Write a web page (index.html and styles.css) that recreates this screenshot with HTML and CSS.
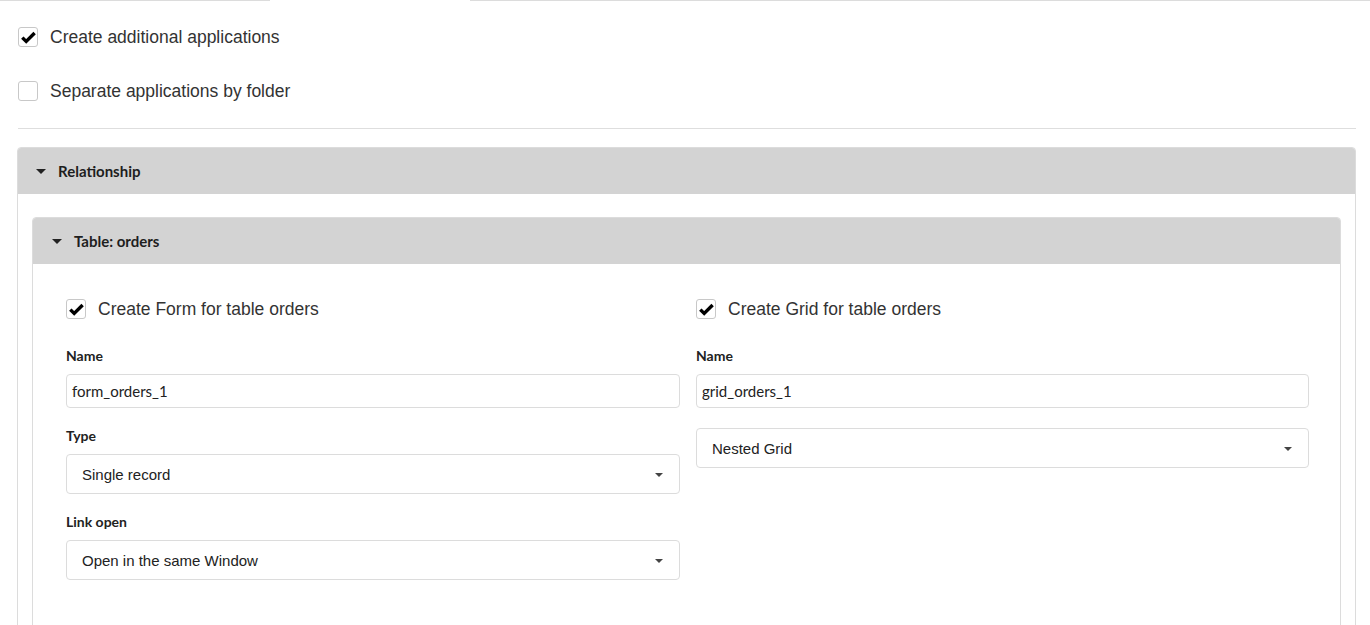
FILE: index.html
```html
<!DOCTYPE html>
<html>
<head>
	<title>Applications</title>
	<meta charset="utf-8">
	<link rel="stylesheet" href="styles.css">
</head>
<body>
  <div class="tabs">
  	<div class="tab-line first"></div>
  	<div class="tab-active"></div>
  	<div class="tab-line rest"></div>
  </div>

  <div class="page">
  	<div class="options">
  		<label class="check-row">
  			<span class="box checked">
  				<svg width="15" height="13" viewBox="0 0 15 13"><path d="M1.3 6.6 L5.2 10.4 L13.6 2" fill="none" stroke="#000" stroke-width="3.4"/></svg>
  			</span>
  			Create additional applications
  		</label>
  		<label class="check-row">
  			<span class="box"></span>
  			Separate applications by folder
  		</label>
  	</div>

  	<div class="divider"></div>

  	<div class="panel">
  		<div class="panel-head">
  			<span class="caret"></span>Relationship
  		</div>
  		<div class="panel-body outer">
  			<div class="panel">
  				<div class="panel-head inner">
  					<span class="caret"></span>Table: orders
  				</div>
  				<div class="panel-body table">
  					<div class="col">
  						<label class="check-row big">
  							<span class="box checked">
  								<svg width="15" height="13" viewBox="0 0 15 13"><path d="M1.3 6.6 L5.2 10.4 L13.6 2" fill="none" stroke="#000" stroke-width="3.4"/></svg>
  							</span>
  							Create Form for table orders
  						</label>
  						<div class="field">
  							<div class="field-label">Name</div>
  							<div class="input">form_orders_1</div>
  						</div>
  						<div class="field">
  							<div class="field-label">Type</div>
  							<div class="select">Single record<span class="arrow"></span></div>
  						</div>
  						<div class="field">
  							<div class="field-label">Link open</div>
  							<div class="select">Open in the same Window<span class="arrow"></span></div>
  						</div>
  					</div>
  					<div class="col">
  						<label class="check-row big">
  							<span class="box checked">
  								<svg width="15" height="13" viewBox="0 0 15 13"><path d="M1.3 6.6 L5.2 10.4 L13.6 2" fill="none" stroke="#000" stroke-width="3.4"/></svg>
  							</span>
  							Create Grid for table orders
  						</label>
  						<div class="field">
  							<div class="field-label">Name</div>
  							<div class="input">grid_orders_1</div>
  						</div>
  						<div class="select nolabel">Nested Grid<span class="arrow"></span></div>
  					</div>
  				</div>
  			</div>
  		</div>
  	</div>
  </div>
</body>
</html>
```

FILE: styles.css
```css
body {
	margin: 0;
	background: #fff;
	color: #333;
	font-family: "Liberation Sans", Arial, sans-serif;
	overflow: hidden;
}
.tabs {
	display: flex;
	height: 1px;
}
.tab-line {
	background: #dcdcdc;
}
.tab-line.first {
	width: 270px;
}
.tab-active {
	width: 200px;
}
.tab-line.rest {
	flex: 1;
}
.page {
	padding: 0 14px 0 17px;
}
.options {
	padding: 26px 0 0 1px;
}
.check-row {
	display: flex;
	align-items: center;
	gap: 12px;
	height: 20px;
	margin-bottom: 34px;
	font-size: 17.5px;
	color: #333;
}
.options .check-row:last-child {
	margin-bottom: 27px;
}
.box {
	width: 18px;
	height: 18px;
	border: 1px solid #c8c8c8;
	border-radius: 3px;
	display: flex;
	align-items: center;
	justify-content: center;
	background: #fff;
	flex: none;
}
.divider {
	height: 1px;
	background: #dedede;
	margin: 0 0 18px 1px;
}
.panel {
	border: 1px solid #dcdcdc;
	border-radius: 4px;
	overflow: hidden;
}
.panel-head {
	height: 46px;
	background: #d3d3d3;
	display: flex;
	align-items: center;
	padding-left: 18px;
	font-family: Lato, "Liberation Sans", sans-serif;
	font-weight: 700;
	font-size: 15px;
	color: #1e1e1e;
}
.panel-head.inner {
	padding-left: 19px;
}
.caret {
	width: 0;
	height: 0;
	border-left: 5px solid transparent;
	border-right: 5px solid transparent;
	border-top: 5px solid #222;
	margin-right: 12px;
}
.panel-body.outer {
	padding: 23px 14px 0 14px;
	height: 500px;
}
.panel-body.table {
	display: grid;
	grid-template-columns: 614px 613px;
	column-gap: 16px;
	padding: 35px 31px 0 33px;
	height: 500px;
}
.check-row.big {
	margin-bottom: 29px;
}
.field {
	margin-bottom: 20px;
}
.field-label {
	font-family: Lato, "Liberation Sans", sans-serif;
	font-weight: 700;
	font-size: 14px;
	line-height: 16px;
	color: #222;
	margin-bottom: 10px;
}
.input {
	height: 32px;
	border: 1px solid #dcdcdc;
	border-radius: 4px;
	padding: 0 5px;
	display: flex;
	align-items: center;
	font-family: Lato, "Liberation Sans", sans-serif;
	font-size: 15px;
	color: #222;
}
.select {
	position: relative;
	height: 38px;
	border: 1px solid #dcdcdc;
	border-radius: 4px;
	padding: 0 15px;
	display: flex;
	align-items: center;
	font-size: 15px;
	color: #222;
}
.select.nolabel {
	margin-top: 2px;
}
.arrow {
	position: absolute;
	right: 16px;
	top: 18px;
	width: 0;
	height: 0;
	border-left: 4px solid transparent;
	border-right: 4px solid transparent;
	border-top: 4px solid #444;
}
```
